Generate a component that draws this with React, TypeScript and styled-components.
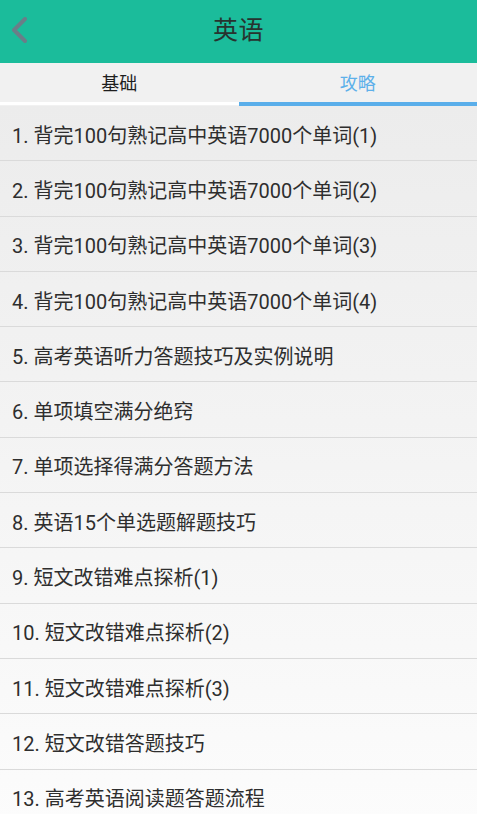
import React, { useState } from "react";
import styled, { createGlobalStyle } from "styled-components";

const GlobalStyle = createGlobalStyle`
  html, body {
    margin: 0;
    padding: 0;
    background: #f8f8f8;
  }
  body {
    font-family: Roboto, "Noto Sans CJK SC", sans-serif;
  }
`;

const items = [
  "背完100句熟记高中英语7000个单词(1)",
  "背完100句熟记高中英语7000个单词(2)",
  "背完100句熟记高中英语7000个单词(3)",
  "背完100句熟记高中英语7000个单词(4)",
  "高考英语听力答题技巧及实例说明",
  "单项填空满分绝窍",
  "单项选择得满分答题方法",
  "英语15个单选题解题技巧",
  "短文改错难点探析(1)",
  "短文改错难点探析(2)",
  "短文改错难点探析(3)",
  "短文改错答题技巧",
  "高考英语阅读题答题流程",
];

const App: React.FC = () => {
  const [tab, setTab] = useState(1);

  return (
    <Page>
      <GlobalStyle />
      <Header>
        <Back aria-label="back">
          <svg width="20" height="30" viewBox="0 0 20 30">
            <polyline
              points="14,4 3,15 14,26"
              fill="none"
              stroke="#6a7e88"
              strokeWidth="4"
              strokeLinecap="round"
              strokeLinejoin="round"
            />
          </svg>
        </Back>
        <Title>英语</Title>
        <span />
      </Header>
      <Tabs>
        {["基础", "攻略"].map((t, i) => (
          <Tab key={t} active={i === tab} onClick={() => setTab(i)}>
            {t}
          </Tab>
        ))}
      </Tabs>
      <List>
        {items.map((text, i) => (
          <Row key={i}>
            {i + 1}. {text}
          </Row>
        ))}
      </List>
    </Page>
  );
};

export default App;

const Page = styled.div`
  width: 477px;
  height: 814px;
  overflow: hidden;
  display: flex;
  flex-direction: column;
`;

const Header = styled.div`
  height: 63px;
  flex-shrink: 0;
  background: #1bbc9b;
  display: grid;
  grid-template-columns: 1fr auto 1fr;
  align-items: center;
`;

const Back = styled.div`
  padding-left: 11px;
  padding-bottom: 3px;
  display: flex;
  align-items: center;
  filter: blur(0.4px);
`;

const Title = styled.div`
  font-size: 25px;
  color: #27332f;
  letter-spacing: 0.5px;
  padding-bottom: 8px;
`;

const Tabs = styled.div`
  height: 43px;
  flex-shrink: 0;
  display: grid;
  grid-template-columns: 1fr 1fr;
  background: #f1f1f1;
`;

const Tab = styled.div<{ active: boolean }>`
  display: flex;
  align-items: center;
  justify-content: center;
  padding-bottom: 2px;
  font-size: 18px;
  color: ${(p) => (p.active ? "#5db0ea" : "#1e1e1e")};
  border-bottom: ${(p) => (p.active ? "4px solid #5aaeea" : "3px solid #ffffff")};
  margin-bottom: ${(p) => (p.active ? "0" : "1px")};
  box-sizing: border-box;
  cursor: pointer;
`;

const List = styled.div`
  flex: 1;
  background: linear-gradient(#ececec, #fcfcfc);
`;

const Row = styled.div`
  height: 55.3px;
  box-sizing: border-box;
  border-bottom: 1px solid #dadada;
  display: flex;
  align-items: center;
  padding-left: 12px;
  padding-top: 2px;
  font-size: 20px;
  color: #2e2e2e;
  white-space: nowrap;
`;
